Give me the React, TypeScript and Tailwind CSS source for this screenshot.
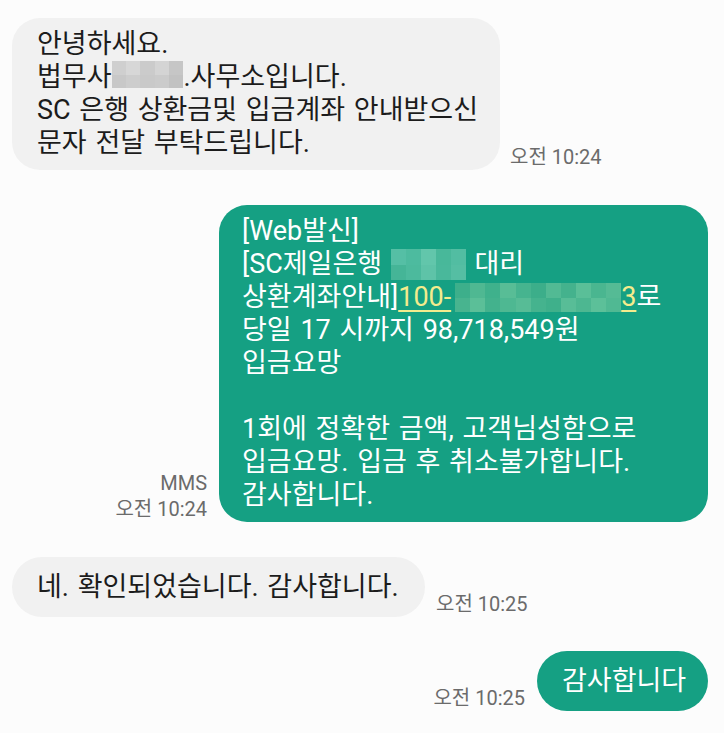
type MosaicProps = {
  rows: string[][];
  cell: number;
  rowHeight: number;
  className?: string;
};

function Mosaic({ rows, cell, rowHeight, className }: MosaicProps) {
  return (
    <span className={`inline-flex flex-col align-top ${className ?? ''}`}>
      {rows.map((row, r) => (
        <span key={r} className="flex">
          {row.map((c, i) => (
            <span key={i} style={{ backgroundColor: c, width: cell, height: rowHeight }} />
          ))}
        </span>
      ))}
    </span>
  );
}

const grayBlur = [
  ['#cfcfcf', '#d7d7d7', '#cbcbcb', '#d4d4d4', '#c6c6c6'],
  ['#c8c8c8', '#cdcdcd', '#c9c9c9', '#cbcbcb', '#c2c2c2'],
];

const tealBlur = [
  ['#55bfa5', '#4dbb9f', '#62c6ab', '#48b89a', '#52bda2'],
  ['#45b597', '#4cba9d', '#5ec3a8', '#49b89b', '#55bea3'],
];

const accountBlur = [
  ['#3daf8b', '#4fb892', '#3fb18c', '#58bd96', '#46b48f', '#3cae8a', '#52ba94', '#44b28d', '#5abf98', '#4ab690', '#55bb95'],
  ['#48b48f', '#5bbf98', '#43b28d', '#4eb892', '#57bc96', '#45b38e', '#3fb08b', '#58bd97', '#4db791', '#5cc099', '#50b993'],
];

function Time({ children }: { children: React.ReactNode }) {
  return <span className="shrink-0 text-[20px] leading-[26px] [word-spacing:0px] text-[#6b6b6b]">{children}</span>;
}

export default function App() {
  return (
    <div className="h-[733px] w-[724px] overflow-hidden bg-[#fcfcfc] pl-[12px] pr-[16px] pt-[18px] font-[Roboto,'Noto_Sans_CJK_KR',sans-serif] text-[27px] leading-[33px] [word-spacing:2px]">
      <div className="flex flex-col gap-[35px]">
        {/* incoming */}
        <div className="flex items-end gap-[10px]">
          <div className="w-[488px] rounded-[28px] bg-[#f1f1f1] py-[10px] pl-[25px] text-[#1c1c1c]">
            안녕하세요.
            <br />
            법무사
            <Mosaic rows={grayBlur} cell={14.4} rowHeight={13.5} />
            .사무소입니다.
            <br />
            SC 은행 상환금및 입금계좌 안내받으신
            <br />
            문자 전달 부탁드립니다.
          </div>
          <Time>오전 10:24</Time>
        </div>

        {/* outgoing */}
        <div className="flex items-end justify-end gap-[12px]">
          <div className="flex flex-col items-end">
            <Time>MMS</Time>
            <Time>오전 10:24</Time>
          </div>
          <div className="w-[489px] rounded-[28px] bg-[#15a083] py-[10px] pl-[23px] text-white">
            [Web발신]
            <br />
            [SC제일은행{' '}
            <Mosaic rows={tealBlur} cell={15} rowHeight={15.5} className="mt-[1px]" /> 대리
            <br />
            상환계좌안내]
            <span className="text-[#f3ec8d] underline underline-offset-[4px]">
              100-
              <Mosaic rows={accountBlur} cell={15.1} rowHeight={14.5} className="mt-[2px] ml-[4px]" />
              3
            </span>
            로
            <br />
            당일 17 시까지 98,718,549원
            <br />
            입금요망
            <br />
            <br />
            1회에 정확한 금액, 고객님성함으로
            <br />
            입금요망. 입금 후 취소불가합니다.
            <br />
            감사합니다.
          </div>
        </div>

        <div className="flex items-end gap-[11px]">
          <div className="w-[413px] rounded-full bg-[#f1f1f1] py-[13.5px] pl-[25px] text-[#1c1c1c]">
            네. 확인되었습니다. 감사합니다.
          </div>
          <Time>오전 10:25</Time>
        </div>

        <div className="-mt-px flex items-end justify-end gap-[12px]">
          <Time>오전 10:25</Time>
          <div className="w-[171px] rounded-full bg-[#15a083] py-[13.5px] pl-[25px] text-white">감사합니다</div>
        </div>
      </div>
    </div>
  );
}
